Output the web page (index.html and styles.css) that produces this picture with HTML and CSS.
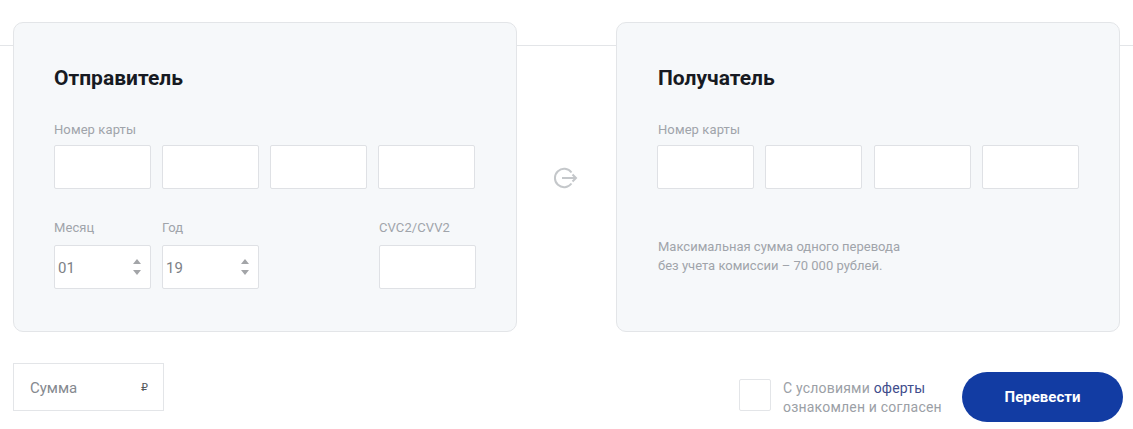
FILE: index.html
```html
<!DOCTYPE html>
<html lang="en">
<head>
    <meta charset="UTF-8">
    <title>Перевод с карты на карту</title>
    <link rel="stylesheet" href="styles.css">
</head>
<body>
    <div class="page">
        <div class="cards">
            <section class="card">
                <h2>Отправитель</h2>
                <label class="label">Номер карты</label>
                <div class="number-row sender-row">
                    <input class="field" type="text">
                    <input class="field" type="text">
                    <input class="field" type="text">
                    <input class="field" type="text">
                </div>
                <div class="date-row">
                    <div class="date-col">
                        <label class="label">Месяц</label>
                        <div class="field spinner">
                            <span>01</span>
                            <svg class="arrows" width="8" height="16" viewBox="0 0 8 16"><path d="M4 0l4 5H0zM4 16l4-5H0z" fill="#a3a5a8"/></svg>
                        </div>
                    </div>
                    <div class="date-col">
                        <label class="label">Год</label>
                        <div class="field spinner">
                            <span>19</span>
                            <svg class="arrows" width="8" height="16" viewBox="0 0 8 16"><path d="M4 0l4 5H0zM4 16l4-5H0z" fill="#a3a5a8"/></svg>
                        </div>
                    </div>
                    <div class="date-col cvc-col">
                        <label class="label">CVC2/CVV2</label>
                        <input class="field" type="text">
                    </div>
                </div>
            </section>

            <svg class="transfer-icon" width="26" height="22" viewBox="0 0 26 22" fill="none" stroke="#c4c7ca" stroke-width="2">
                <path d="M19.500 5.500A9.200 9.200 0 1 0 19.500 16.500"/>
                <path d="M10 11h14M20.500 7.500L24 11l-3.500 3.500"/>
            </svg>

            <section class="card receiver">
                <h2>Получатель</h2>
                <label class="label">Номер карты</label>
                <div class="number-row receiver-row">
                    <input class="field" type="text">
                    <input class="field" type="text">
                    <input class="field" type="text">
                    <input class="field" type="text">
                </div>
                <p class="note">Максимальная сумма одного перевода<br>без учета комиссии – 70 000 рублей.</p>
            </section>
        </div>

        <div class="bottom">
            <div class="amount">
                <span>Сумма</span>
                <span class="currency">₽</span>
            </div>
            <div class="confirm">
                <span class="checkbox"></span>
                <p class="terms">С условиями <a href="#">оферты</a><br>ознакомлен и согласен</p>
                <button class="send">Перевести</button>
            </div>
        </div>
    </div>
</body>
</html>
```

FILE: styles.css
```css
body {
    margin: 0;
    background-color: white;
    font-family: 'Roboto', 'Liberation Sans', sans-serif;
    color: #9ba0a6;
}
.page {
    height: 429px;
    box-sizing: border-box;
    padding: 22px 13px 0;
    background: linear-gradient(#e3e5e8, #e3e5e8) 0 45px / 100% 1px no-repeat;
}
.cards {
    display: flex;
    justify-content: space-between;
    align-items: center;
    width: 1107px;
}
.card {
    box-sizing: border-box;
    width: 504px;
    height: 310px;
    padding: 42px 40px 0;
    background-color: #f6f8fa;
    border: 1px solid #e3e5e8;
    border-radius: 10px;
}
.receiver {
    padding-left: 41px;
}
h2 {
    margin: 0 0 31px;
    font-size: 21px;
    line-height: 26px;
    font-weight: 700;
    color: #171a22;
    letter-spacing: 0;
}
.label {
    display: block;
    margin-bottom: 8px;
    font-size: 13px;
    line-height: 15px;
    letter-spacing: 0.1px;
    color: #a0a4aa;
}
.field {
    box-sizing: border-box;
    width: 97px;
    height: 44px;
    margin: 0;
    padding: 0;
    background-color: white;
    border: 1px solid #dfe1e5;
    border-radius: 2px;
}
.number-row {
    display: flex;
}
.sender-row {
    gap: 11px;
}
.receiver-row {
    gap: 11.340px;
    margin-left: -1px;
}
.date-row {
    display: flex;
    gap: 11px;
    margin-top: 31px;
}
.date-col .label {
    margin-bottom: 10px;
}
.cvc-col {
    margin-left: 109px;
}
.spinner {
    display: flex;
    justify-content: space-between;
    align-items: center;
    padding: 0 9px 0 3px;
    font-size: 15px;
    color: #7d8186;
}
.spinner span {
    margin-top: 2px;
}
.transfer-icon {
    margin: 2px 4px 0 0;
}
.note {
    margin: 48px 0 0;
    font-size: 13px;
    line-height: 19px;
    color: #a0a4aa;
}
.bottom {
    display: flex;
    justify-content: space-between;
    width: 1110px;
    margin-top: 31px;
}
.amount {
    box-sizing: border-box;
    display: flex;
    justify-content: space-between;
    align-items: center;
    width: 151px;
    height: 48px;
    padding: 1px 15px 0 16px;
    border: 1px solid #e3e5e8;
    font-size: 15px;
    color: #85898f;
}
.currency {
    font-family: 'DejaVu Sans', sans-serif;
    font-size: 11px;
    color: #55585c;
}
.confirm {
    display: flex;
    align-items: flex-start;
    margin-top: 9px;
}
.checkbox {
    box-sizing: border-box;
    width: 32px;
    height: 32px;
    margin-top: 7px;
    border: 1px solid #e3e5e8;
    border-radius: 2px;
}
.terms {
    width: 179px;
    margin: 7px 0 0 12px;
    font-size: 14px;
    line-height: 19px;
    letter-spacing: 0.2px;
    color: #9ba0a6;
}
.terms a {
    color: #3f4d8c;
    text-decoration: none;
}
.send {
    width: 161px;
    height: 50px;
    background-color: #123ca3;
    color: white;
    border: none;
    border-radius: 25px;
    font-family: inherit;
    font-size: 15px;
    font-weight: 700;
    cursor: pointer;
}
```
